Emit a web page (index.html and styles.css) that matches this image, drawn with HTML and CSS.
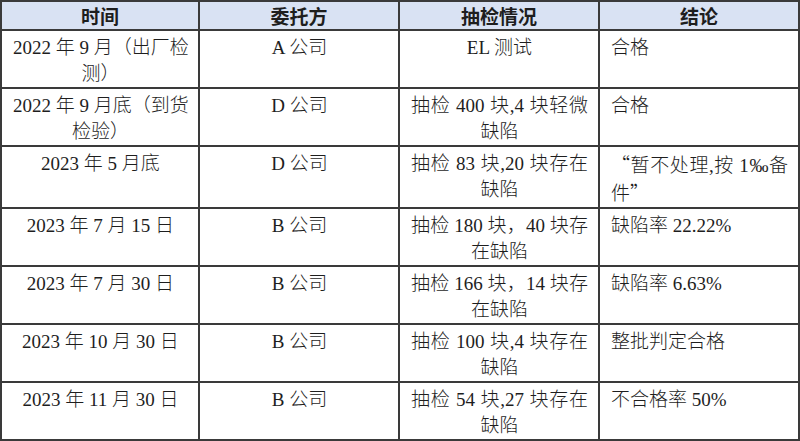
FILE: index.html
```html
<!DOCTYPE html>
<html lang="zh-CN">
<head>
<meta charset="utf-8">
<title>抽检记录</title>
<link rel="stylesheet" href="styles.css">
</head>
<body>
<div class="table">
  <div class="cell head">时间</div>
  <div class="cell head">委托方</div>
  <div class="cell head">抽检情况</div>
  <div class="cell head">结论</div>

  <div class="cell center"><span class="ln fill">2022 年 9 月（出厂检</span><span class="ln">测）</span></div>
  <div class="cell center"><span class="ln">A 公司</span></div>
  <div class="cell center"><span class="ln">EL 测试</span></div>
  <div class="cell left"><span class="ln">合格</span></div>

  <div class="cell center"><span class="ln fill">2022 年 9 月底（到货</span><span class="ln">检验）</span></div>
  <div class="cell center"><span class="ln">D 公司</span></div>
  <div class="cell center"><span class="ln fill">抽检 400 块,4 块轻微</span><span class="ln">缺陷</span></div>
  <div class="cell left"><span class="ln">合格</span></div>

  <div class="cell center"><span class="ln">2023 年 5 月底</span></div>
  <div class="cell center"><span class="ln">D 公司</span></div>
  <div class="cell center"><span class="ln fill">抽检 83 块,20 块存在</span><span class="ln">缺陷</span></div>
  <div class="cell left"><span class="ln fill"><span class="cjk">“</span>暂不处理,按 1‰备</span><span class="ln">件<span class="cjk">”</span></span></div>

  <div class="cell center"><span class="ln">2023 年 7 月 15 日</span></div>
  <div class="cell center"><span class="ln">B 公司</span></div>
  <div class="cell center"><span class="ln fill">抽检 180 块，40 块存</span><span class="ln">在缺陷</span></div>
  <div class="cell left"><span class="ln">缺陷率 22.22%</span></div>

  <div class="cell center"><span class="ln">2023 年 7 月 30 日</span></div>
  <div class="cell center"><span class="ln">B 公司</span></div>
  <div class="cell center"><span class="ln fill">抽检 166 块，14 块存</span><span class="ln">在缺陷</span></div>
  <div class="cell left"><span class="ln">缺陷率 6.63%</span></div>

  <div class="cell center"><span class="ln">2023 年 10 月 30 日</span></div>
  <div class="cell center"><span class="ln">B 公司</span></div>
  <div class="cell center"><span class="ln fill">抽检 100 块,4 块存在</span><span class="ln">缺陷</span></div>
  <div class="cell left"><span class="ln">整批判定合格</span></div>

  <div class="cell center"><span class="ln">2023 年 11 月 30 日</span></div>
  <div class="cell center"><span class="ln">B 公司</span></div>
  <div class="cell center"><span class="ln fill">抽检 54 块,27 块存在</span><span class="ln">缺陷</span></div>
  <div class="cell left"><span class="ln">不合格率 50%</span></div>
</div>
</body>
</html>
```

FILE: styles.css
```css
html, body {
  margin: 0;
  padding: 0;
  background: #ffffff;
}

body {
  width: 800px;
  height: 441px;
  overflow: hidden;
  font-family: "Liberation Serif", "Noto Sans CJK SC", serif;
  font-size: 19px;
  font-weight: 300;
  color: #1e1e1e;
}

.table {
  display: grid;
  grid-template-columns: 198px 200px 200px 200px;
  width: 800px;
  border-top: 2px solid #3a3a3a;
  border-left: 2px solid #3a3a3a;
  box-sizing: border-box;
}

.cell {
  border-right: 2px solid #3a3a3a;
  border-bottom: 2px solid #3a3a3a;
  padding: 4px 10px 0 11px;
  line-height: 26px;
  min-height: 52px;
  display: flex;
  flex-direction: column;
}

.head {
  background: #d9e2f3;
  font-family: "Noto Sans CJK SC", sans-serif;
  font-weight: 700;
  text-align: center;
  padding: 0;
  line-height: 27px;
  min-height: 27px;
  justify-content: center;
}

.center {
  text-align: center;
}

.left {
  text-align: left;
}

.ln {
  display: block;
  white-space: nowrap;
}

.fill {
  text-align: justify;
  text-align-last: justify;
  text-justify: inter-character;
}

.cjk {
  font-family: "Noto Sans CJK SC", sans-serif;
}
```
